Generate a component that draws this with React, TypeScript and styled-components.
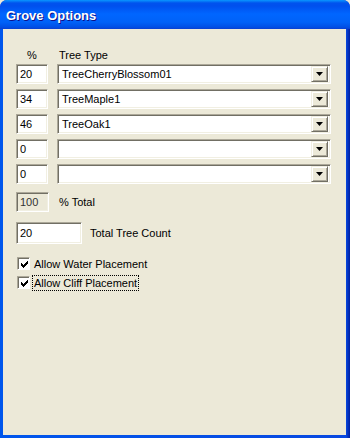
import React, { useState } from 'react'
import styled, { createGlobalStyle } from 'styled-components'

const Global = createGlobalStyle`
  html, body { margin: 0; padding: 0; background: #ece9d8; }
  body { font-family: "Liberation Sans", Arial, sans-serif; font-size: 11px; color: #000; }
`

const Window = styled.div`
  width: 350px;
  height: 438px;
  display: flex;
  flex-direction: column;
  background: #0831d9;
  border-radius: 7px 7px 0 0;
  overflow: hidden;
`

const TitleBar = styled.div`
  height: 29px;
  flex: none;
  display: flex;
  align-items: center;
  padding: 1px 6px 0;
  background: linear-gradient(to bottom, #0997ff 0px, #0053ee 3px, #0050ee 6px, #06f 14px, #0062f8 22px, #0050e6 27px, #0a3fd0 29px);
  color: #fff;
  font-family: "Liberation Sans", Arial, sans-serif;
  font-weight: bold;
  font-size: 13px;
  text-shadow: 1px 1px #0f1089;
  box-sizing: border-box;
`

const Frame = styled.div`
  flex: 1;
  display: flex;
  padding: 0 4px 3px 3px;
  background: linear-gradient(to right, #0056ec 0, #0056ec 3px, #0848e0 346px, #001ea0 350px);
`

const Panel = styled.div`
  flex: 1;
  background: #ece9d8;
  padding: 20px 15px 0 13px;
  box-sizing: border-box;
  display: flex;
  flex-direction: column;
`

const HeaderRow = styled.div`
  display: grid;
  grid-template-columns: 32px 1fr;
  column-gap: 9px;
  height: 13px;
  line-height: 13px;
  margin-bottom: 2px;
`

const Header = styled.div<{ $center?: boolean }>`
  text-align: ${p => (p.$center ? 'center' : 'left')};
  padding-left: ${p => (p.$center ? '0' : '2px')};
`

const Grid = styled.div`
  display: grid;
  grid-template-columns: 32px 1fr;
  column-gap: 9px;
  row-gap: 5px;
`

const Sunken = styled.div<{ $w?: number; $h?: number; $disabled?: boolean }>`
  box-sizing: border-box;
  width: ${p => (p.$w ? p.$w + 'px' : 'auto')};
  height: ${p => p.$h || 20}px;
  background: ${p => (p.$disabled ? '#ece9d8' : '#fff')};
  color: ${p => (p.$disabled ? '#333' : '#000')};
  border-top: 1px solid #aca899;
  border-left: 1px solid #aca899;
  border-right: 1px solid #fff;
  border-bottom: 1px solid #fff;
  box-shadow: inset 1px 1px #716f64, inset -1px -1px #f1efe2;
  display: flex;
  align-items: center;
  padding: 0 3px;
  white-space: nowrap;
`

const Combo = styled(Sunken)`
  padding: 0 2px 0 4px;
  justify-content: space-between;
`

const DropButton = styled.div`
  width: 17px;
  height: 16px;
  box-sizing: border-box;
  background: #ece9d8;
  border-top: 1px solid #f1efe2;
  border-left: 1px solid #f1efe2;
  border-right: 1px solid #716f64;
  border-bottom: 1px solid #716f64;
  box-shadow: inset 1px 1px #fff, inset -1px -1px #aca899;
  display: flex;
  align-items: center;
  justify-content: center;
`

const Line = styled.div<{ $top: number }>`
  display: flex;
  align-items: center;
  gap: 8px;
  margin-top: ${p => p.$top}px;
`

const Label = styled.span<{ $pad?: number }>`
  padding-left: ${p => p.$pad || 0}px;
`

const CheckRow = styled.label<{ $top: number }>`
  display: flex;
  align-items: center;
  gap: 2px;
  margin-top: ${p => p.$top}px;
  margin-left: 1px;
  height: 15px;
`

const Box = styled.span`
  width: 13px;
  height: 13px;
  box-sizing: border-box;
  background: #fff;
  border-top: 1px solid #aca899;
  border-left: 1px solid #aca899;
  border-right: 1px solid #fff;
  border-bottom: 1px solid #fff;
  box-shadow: inset 1px 1px #716f64;
  display: flex;
  align-items: center;
  justify-content: center;
`

const CheckText = styled.span<{ $focus?: boolean }>`
  padding: 1px 1px;
  border: 1px dotted ${p => (p.$focus ? '#000' : 'transparent')};
  line-height: 12px;
`

function Arrow() {
  return (
    <svg width="7" height="4" viewBox="0 0 7 4">
      <path d="M0 0h7L3.5 4z" fill="#000" />
    </svg>
  )
}

function Tick() {
  return (
    <svg width="7" height="7" viewBox="0 0 7 7" style={{ marginLeft: 1, marginTop: 1 }}>
      <path d="M0 2h1v1h1v1h1V3h1V2h1V1h1V0h1v3H6v1H5v1H4v1H3v1H2V6H1V5H0z" fill="#000" shapeRendering="crispEdges" />
    </svg>
  )
}

export default function App() {
  const [rows] = useState([
    { pct: '20', type: 'TreeCherryBlossom01' },
    { pct: '34', type: 'TreeMaple1' },
    { pct: '46', type: 'TreeOak1' },
    { pct: '0', type: '' },
    { pct: '0', type: '' },
  ])
  return (
    <>
      <Global />
      <Window>
        <TitleBar>Grove Options</TitleBar>
        <Frame>
          <Panel>
            <HeaderRow>
              <Header $center>%</Header>
              <Header>Tree Type</Header>
            </HeaderRow>
            <Grid>
              {rows.map((r, i) => (
                <React.Fragment key={i}>
                  <Sunken>{r.pct}</Sunken>
                  <Combo>
                    <span>{r.type}</span>
                    <DropButton>
                      <Arrow />
                    </DropButton>
                  </Combo>
                </React.Fragment>
              ))}
            </Grid>
            <Line $top={8}>
              <Sunken $w={33} $disabled>100</Sunken>
              <Label $pad={2}>% Total</Label>
            </Line>
            <Line $top={10}>
              <Sunken $w={66} $h={22}>20</Sunken>
              <Label>Total Tree Count</Label>
            </Line>
            <CheckRow $top={12}>
              <Box><Tick /></Box>
              <CheckText>Allow Water Placement</CheckText>
            </CheckRow>
            <CheckRow $top={4}>
              <Box><Tick /></Box>
              <CheckText $focus>Allow Cliff Placement</CheckText>
            </CheckRow>
          </Panel>
        </Frame>
      </Window>
    </>
  )
}
